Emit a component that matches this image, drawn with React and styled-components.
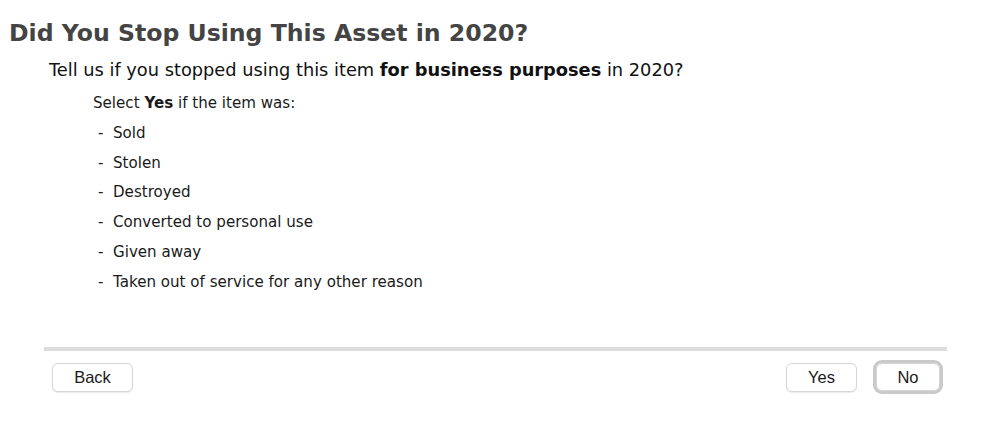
import React from 'react'
import styled, { createGlobalStyle } from 'styled-components'

const GlobalStyle = createGlobalStyle`
  html, body {
    margin: 0;
    padding: 0;
    background: #fff;
  }
  body {
    font-family: "DejaVu Sans", Verdana, sans-serif;
    color: #111;
  }
`

const Page = styled.div`
  width: 999px;
  height: 434px;
  box-sizing: border-box;
  display: flex;
  flex-direction: column;
  padding-top: 17px;
`

const Title = styled.h1`
  margin: 0 0 0 9px;
  font-size: 23.6px;
  line-height: 32px;
  font-weight: bold;
  color: #444;
`

const Question = styled.p`
  margin: 10px 0 0 49px;
  font-size: 17.8px;
  line-height: 22px;
  color: #111;
`

const Details = styled.div`
  margin: 7px 0 0 93px;
  font-size: 15.1px;
  color: #1a1a1a;
`

const Line = styled.div`
  height: 29.8px;
  line-height: 30px;
  padding-left: ${props => (props.$item ? '5px' : '0')};
`

const Dash = styled.span`
  display: inline-block;
  width: 15px;
`

const Rule = styled.hr`
  margin: 50px 52px 0 44px;
  border: none;
  height: 4px;
  background: #dcdcdc;
`

const Footer = styled.div`
  display: flex;
  align-items: center;
  margin: 12px 0 0 52px;
  padding-right: 59px;
`

const Spacer = styled.div`
  flex: 1;
`

const Button = styled.button`
  box-sizing: border-box;
  width: ${props => props.$width || '71px'};
  height: ${props => (props.$focused ? '28px' : '29px')};
  margin-left: ${props => props.$gap || '0'};
  border: 1px solid #d6d6d6;
  border-radius: 6px;
  background: #fff;
  box-shadow: 0 1px 1px rgba(0, 0, 0, 0.08);
  font-family: "Liberation Sans", Arial, sans-serif;
  font-size: 16.5px;
  color: #1a1a1a;
  padding: 0;
  outline: ${props => (props.$focused ? '3px solid #c9c9c9' : 'none')};
  outline-offset: 0;
`

const ITEMS = [
  'Sold',
  'Stolen',
  'Destroyed',
  'Converted to personal use',
  'Given away',
  'Taken out of service for any other reason'
]

export default function App () {
  return (
    <Page>
      <GlobalStyle />
      <Title>Did You Stop Using This Asset in 2020?</Title>
      <Question>
        Tell us if you stopped using this item <b>for business purposes</b> in 2020?
      </Question>
      <Details>
        <Line>Select <b>Yes</b> if the item was:</Line>
        {ITEMS.map((item) => (
          <Line key={item} $item><Dash>-</Dash>{item}</Line>
        ))}
      </Details>
      <Rule />
      <Footer>
        <Button $width="81px">Back</Button>
        <Spacer />
        <Button>Yes</Button>
        <Button $width="64px" $gap="19px" $focused>No</Button>
      </Footer>
    </Page>
  )
}
